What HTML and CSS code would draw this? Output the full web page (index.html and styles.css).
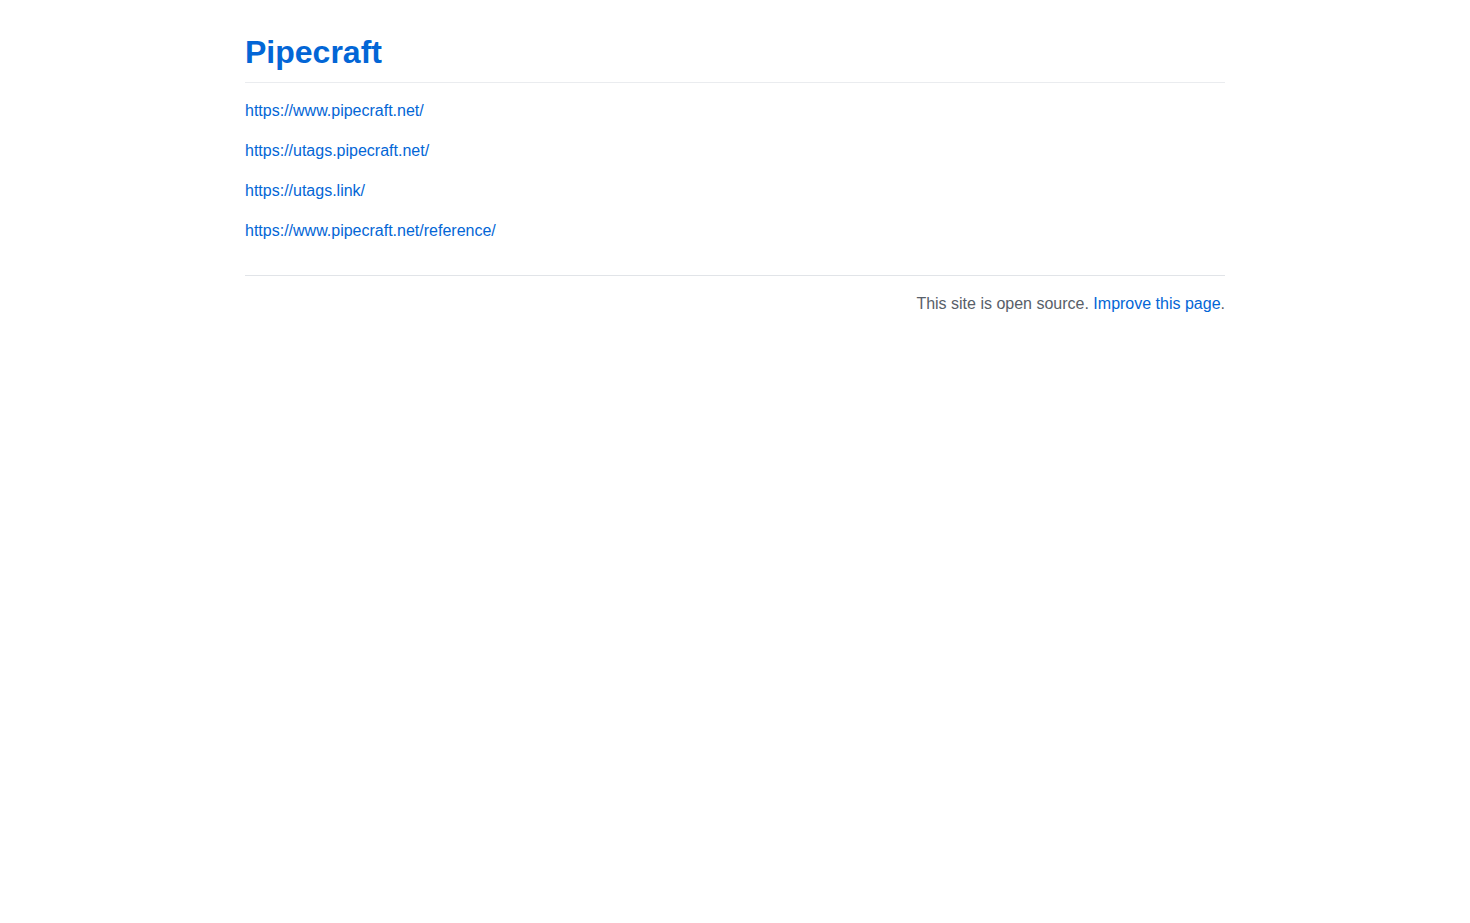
FILE: index.html
```html
<!DOCTYPE html>
<html lang="en">
<head>
<meta charset="utf-8">
<title>Pipecraft</title>
<link rel="stylesheet" href="styles.css">
</head>
<body>
<div class="container">
  <div class="markdown-body">
    <h1 class="title"><a href="#">Pipecraft</a></h1>
    <p><a href="#">https://www.pipecraft.net/</a></p>
    <p><a href="#">https://utags.pipecraft.net/</a></p>
    <p><a href="#">https://utags.link/</a></p>
    <p class="last"><a href="#">https://www.pipecraft.net/reference/</a></p>
  </div>
  <div class="footer">This site is open source. <a href="#">Improve this page</a>.</div>
</div>
</body>
</html>
```
FILE: styles.css
```css
html, body {
  margin: 0;
  padding: 0;
  background: #fff;
}
body {
  font-family: "Liberation Sans", Arial, sans-serif;
  font-size: 16px;
  line-height: 1.5;
  color: #24292e;
}
a {
  color: #0366d6;
  text-decoration: none;
}
.container {
  max-width: 1012px;
  margin: 32px auto;
  padding: 0 16px;
  box-sizing: border-box;
}
.title {
  margin: 0 0 16px 0;
  padding-bottom: 0.3em;
  font-size: 32px;
  font-weight: 700;
  line-height: 1.25;
  border-bottom: 1px solid #eaecef;
}
.markdown-body p {
  margin: 0 0 16px 0;
}
.markdown-body p.last {
  margin-bottom: 0;
}
.footer {
  margin-top: 32px;
  padding-top: 16px;
  border-top: 1px solid #e1e4e8;
  text-align: right;
  color: #586069;
}
```
